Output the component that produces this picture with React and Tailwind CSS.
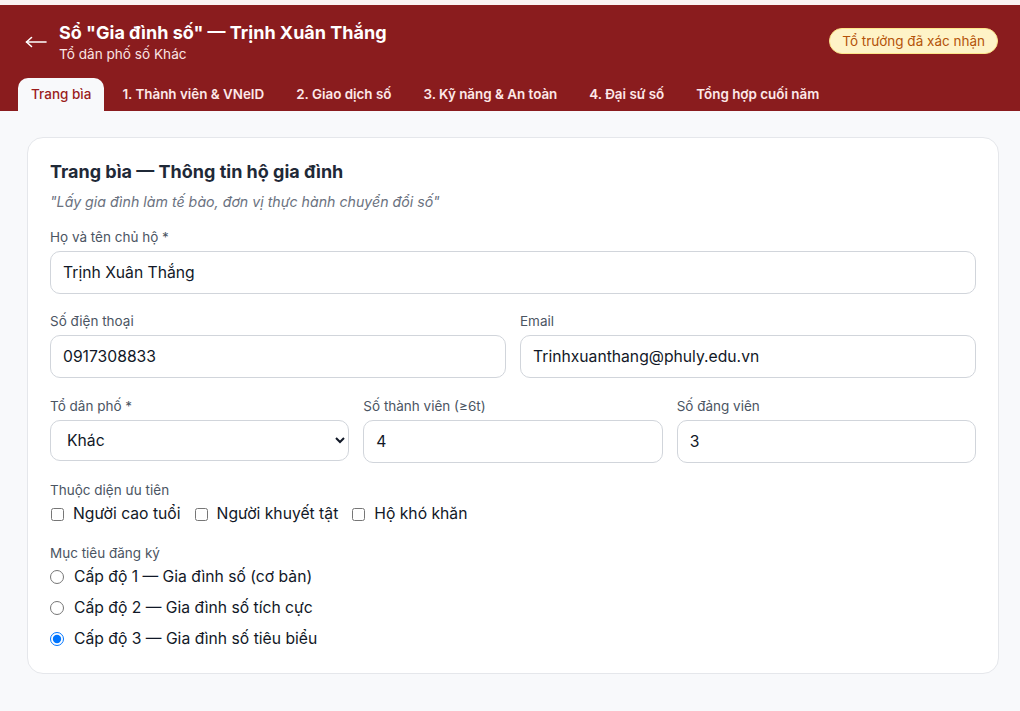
import React from "react";

const tabs = [
  "1. Thành viên & VNeID",
  "2. Giao dịch số",
  "3. Kỹ năng & An toàn",
  "4. Đại sứ số",
  "Tổng hợp cuối năm",
];

function Label({ children }) {
  return (
    <div className="text-[13.5px] leading-5 text-[#4b5563] mb-1">{children}</div>
  );
}

function Input({ value }) {
  return (
    <input
      readOnly
      value={value}
      className="w-full h-[43px] rounded-[10px] border border-[#d1d5db] bg-white px-3 text-[15.7px] text-[#111827] outline-none"
    />
  );
}

export default function App() {
  return (
    <div
      className="min-h-[711px] bg-[#f8f9fb]"
      style={{ fontFamily: "Inter, 'Noto Sans', sans-serif" }}
    >
      <div className="h-[5px] bg-[#fbf2f2]" />
      <header className="bg-[#8a1c1e] pt-4">
        <div className="flex items-start justify-between pl-[25px] pr-[22px]">
          <div className="flex items-start">
            <svg
              width="22"
              height="12"
              viewBox="0 0 22 12"
              className="mt-[15px] mr-[12px]"
              fill="none"
              stroke="white"
              strokeWidth="1.6"
              strokeLinecap="round"
              strokeLinejoin="round"
            >
              <path d="M1.5 6H21" />
              <path d="M6.5 1.5L1.5 6L6.5 10.5" />
            </svg>
            <div>
              <div className="text-white font-bold text-[18px] leading-6">
                Sổ "Gia đình số" — Trịnh Xuân Thắng
              </div>
              <div className="text-[#fbe4e4] text-[13.6px] leading-[18px]">
                Tổ dân phố số Khác
              </div>
            </div>
          </div>
          <div className="mt-[7px] h-[26px] flex items-center rounded-full bg-[#fef3c7] border border-[#fde68a] px-3 text-[13.5px] text-[#b45309]">
            Tổ trưởng đã xác nhận
          </div>
        </div>
        <div className="mt-[15px] flex items-end pl-[18px] gap-1">
          <div className="h-[33px] flex items-center px-[13px] rounded-t-[10px] bg-[#f8f9fb] text-[13.5px] font-medium text-[#9b1c1c]">
            Trang bìa
          </div>
          {tabs.map((t) => (
            <div
              key={t}
              className="h-[33px] flex items-center px-[14px] text-[13.4px] font-semibold text-[#fde8e8]"
            >
              {t}
            </div>
          ))}
        </div>
      </header>

      <main className="pt-[26px] pl-[27px] pr-[21px] pb-8">
        <section className="rounded-[16px] border border-[#e5e7eb] bg-white pt-6 pb-[23px] px-[22px]">
          <h2 className="text-[18px] leading-5 font-bold text-[#1f2937]">
            Trang bìa — Thông tin hộ gia đình
          </h2>
          <p className="mt-[10px] text-[14.2px] leading-5 italic text-[#6b7280]">
            "Lấy gia đình làm tế bào, đơn vị thực hành chuyển đổi số"
          </p>

          <div className="mt-[15px]">
            <Label>Họ và tên chủ hộ *</Label>
            <Input value="Trịnh Xuân Thắng" />
          </div>

          <div className="mt-[17px] grid grid-cols-2 gap-3.5">
            <div>
              <Label>Số điện thoại</Label>
              <Input value="0917308833" />
            </div>
            <div>
              <Label>Email</Label>
              <Input value="Trinhxuanthang@phuly.edu.vn" />
            </div>
          </div>

          <div className="mt-[18px] grid grid-cols-3 gap-3.5">
            <div>
              <Label>Tổ dân phố *</Label>
              <select
                defaultValue="Khác"
                className="w-full h-[41px] rounded-[10px] border border-[#d1d5db] bg-white pl-3 pr-2 text-[15.7px] text-[#111827] outline-none"
              >
                <option>Khác</option>
              </select>
            </div>
            <div>
              <Label>Số thành viên (≥6t)</Label>
              <Input value="4" />
            </div>
            <div>
              <Label>Số đảng viên</Label>
              <Input value="3" />
            </div>
          </div>

          <div className="mt-[17px]">
            <div className="text-[13.5px] leading-5 text-[#4b5563] mb-[3px]">
              Thuộc diện ưu tiên
            </div>
            <div className="flex items-center gap-[13px] text-[15.7px] leading-[22px] text-[#111827]">
              {["Người cao tuổi", "Người khuyết tật", "Hộ khó khăn"].map((c) => (
                <label key={c} className="flex items-center gap-[9px]">
                  <input type="checkbox" className="m-0 ml-[1px] w-[13px] h-[13px]" />
                  {c}
                </label>
              ))}
            </div>
          </div>

          <div className="mt-[18px]">
            <div className="text-[13.5px] leading-5 text-[#4b5563] mb-[3px]">
              Mục tiêu đăng ký
            </div>
            <div className="flex flex-col gap-[9px] text-[15.7px] leading-[22px] text-[#111827]">
              {[
                "Cấp độ 1 — Gia đình số (cơ bản)",
                "Cấp độ 2 — Gia đình số tích cực",
                "Cấp độ 3 — Gia đình số tiêu biểu",
              ].map((r, i) => (
                <label key={r} className="flex items-center gap-[10px]">
                  <input
                    type="radio"
                    name="level"
                    defaultChecked={i === 2}
                    className="m-0 w-[14px] h-[14px]"
                  />
                  {r}
                </label>
              ))}
            </div>
          </div>
        </section>
      </main>
    </div>
  );
}
